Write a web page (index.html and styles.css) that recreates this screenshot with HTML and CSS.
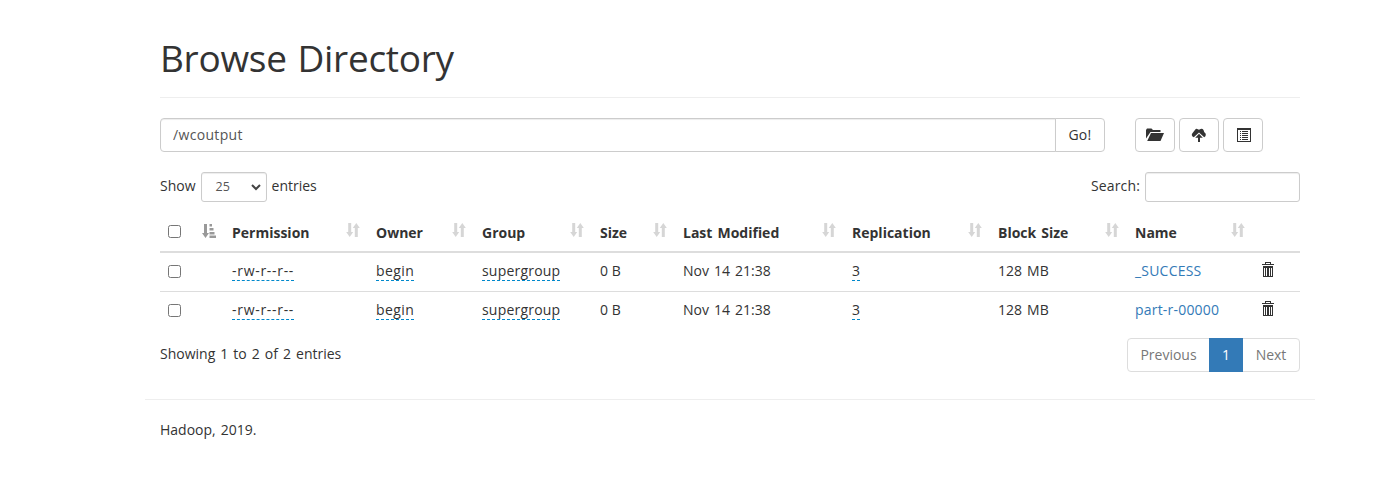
FILE: index.html
```html
<!DOCTYPE html>
<html lang="en">
<head>
<meta charset="utf-8">
<title>Browsing HDFS</title>
<link rel="stylesheet" href="styles.css">
</head>
<body>
<svg class="defs" width="0" height="0" aria-hidden="true">
  <symbol id="sort" viewBox="0 0 14 16"><path d="M2.200 1h3v9h2l-3.500 5L.2 10h2zM8.800 15h3V6h2l-3.500-5-3.500 5h2z"/></symbol>
  <symbol id="sort-asc" viewBox="0 0 16 16"><path d="M3 1h3v9h2l-3.500 5L1 10h2zM8.500 1h2.500v2.500H8.500zM8.500 5h4v2.500h-4zM8.500 9h5v2.500h-5zM8.500 12.500H15V15H8.500z"/></symbol>
  <symbol id="trash" viewBox="0 0 14 16"><path fill-rule="evenodd" d="M4 2V0h6v2h3v1H1V2zM5 2h4V1H5zM2 4h10v11H2zM3 6v8h1V6zM5 6v8h1V6zM8 6v8h1V6zM10 6v8h1V6z"/></symbol>
</svg>
<div class="container">
  <header class="page-header"><h1>Browse Directory</h1></header>
  <div class="toolbar">
    <div class="path-group">
      <input class="path" type="text" value="/wcoutput">
      <button class="btn go">Go!</button>
    </div>
    <div class="actions">
      <button class="btn icon-btn"><svg width="18" height="14" viewBox="0 0 18 14"><path d="M0 10.500V2L1 .5h4.500L7 2h7.500v2H4.500zM5 5h13L14.500 13H1.200z"/></svg></button>
      <button class="btn icon-btn"><svg width="16" height="14" viewBox="0 0 16 14"><path d="M2.800 9.300A2.600 2.600 0 0 1 1.800 4.700L4.300 1.500Q5 .5 6.200 1L8 1.700 9.600.9Q11.500.4 12.500 2L13.300 4.300A2.700 2.700 0 0 1 13.200 9.200L8 4.500zM8 5.800l3.800 4H9V14H7V9.800H4.200z"/></svg></button>
      <button class="btn icon-btn"><svg class="list-icon" width="14" height="14" viewBox="0 0 14 14"><path fill-rule="evenodd" d="M0 0h14v14H0zM1 2v11h12V2zM3 3h1v1H3zM5 3h6v1H5zM3 5h1v1H3zM5 5h6v1H5zM3 7h1v1H3zM5 7h6v1H5zM3 9h1v1H3zM5 9h6v1H5zM3 11h1v1H3zM5 11h6v1H5z"/></svg></button>
    </div>
  </div>
  <div class="controls">
    <label class="length">Show
      <span class="select-box"><span>25</span><svg width="10" height="7" viewBox="0 0 10 7"><path d="M1 1l4 4 4-4"/></svg></span>
      entries</label>
    <label class="search">Search: <input class="search-input" type="text"></label>
  </div>
  <table class="files">
    <colgroup><col class="c-check"><col class="c-perm"><col class="c-owner"><col class="c-group"><col class="c-size"><col class="c-mod"><col class="c-rep"><col class="c-block"><col class="c-name"><col class="c-del"></colgroup>
    <thead>
      <tr>
        <th><div class="head"><input type="checkbox"><svg class="sorted" width="16" height="16"><use href="#sort-asc"/></svg></div></th>
        <th><div class="head"><span>Permission</span><svg width="14" height="16"><use href="#sort"/></svg></div></th>
        <th><div class="head"><span>Owner</span><svg width="14" height="16"><use href="#sort"/></svg></div></th>
        <th><div class="head"><span>Group</span><svg width="14" height="16"><use href="#sort"/></svg></div></th>
        <th><div class="head"><span>Size</span><svg width="14" height="16"><use href="#sort"/></svg></div></th>
        <th><div class="head"><span>Last Modified</span><svg width="14" height="16"><use href="#sort"/></svg></div></th>
        <th><div class="head"><span>Replication</span><svg width="14" height="16"><use href="#sort"/></svg></div></th>
        <th><div class="head"><span>Block Size</span><svg width="14" height="16"><use href="#sort"/></svg></div></th>
        <th><div class="head"><span>Name</span><svg width="14" height="16"><use href="#sort"/></svg></div></th>
        <th></th>
      </tr>
    </thead>
    <tbody>
      <tr>
        <td><input type="checkbox"></td>
        <td><span class="editable perm">-rw-r--r--</span></td>
        <td><span class="editable owner">begin</span></td>
        <td><span class="editable group">supergroup</span></td>
        <td class="size">0 B</td><td>Nov 14 21:38</td>
        <td><span class="editable">3</span></td>
        <td>128 MB</td><td><a>_SUCCESS</a></td>
        <td><svg class="trash" width="14" height="16"><use href="#trash"/></svg></td>
      </tr>
      <tr>
        <td><input type="checkbox"></td>
        <td><span class="editable perm">-rw-r--r--</span></td>
        <td><span class="editable owner">begin</span></td>
        <td><span class="editable group">supergroup</span></td>
        <td class="size">0 B</td><td>Nov 14 21:38</td>
        <td><span class="editable">3</span></td>
        <td>128 MB</td><td><a>part-r-00000</a></td>
        <td><svg class="trash" width="14" height="16"><use href="#trash"/></svg></td>
      </tr>
    </tbody>
  </table>
  <div class="summary">
    <div class="info">Showing 1 to 2 of 2 entries</div>
    <div class="pagination"><span class="prev">Previous</span><span class="active">1</span><span class="next">Next</span></div>
  </div>
  <hr>
  <footer>Hadoop, 2019.</footer>
</div>
</body>
</html>
```
FILE: styles.css
```css
* { box-sizing: border-box; }
body { margin: 0; background: #fff; color: #333; font: 14px/20px "Open Sans", "Noto Sans", sans-serif; word-spacing: 1.4px; }
input, button { font: inherit; color: inherit; }
.defs { display: block; height: 0; }
.container { width: 1140px; margin-left: 160px; padding-top: 36px; }
.page-header { height: 62px; border-bottom: 1px solid #eee; }
h1 { margin: 0; font-size: 37px; font-weight: 400; line-height: 44px; letter-spacing: -.28px; white-space: nowrap; }
.toolbar { display: flex; gap: 30px; margin-top: 20px; }
.path-group { display: flex; width: 945px; height: 34px; }
.path { flex: 1; min-width: 0; padding: 0 12px; border: 1px solid #ccc; border-radius: 4px 0 0 4px; color: #555; letter-spacing: .33px; outline: 0; box-shadow: inset 0 1px 1px rgba(0,0,0,.075); }
.btn { background: #fff; border: 1px solid #ccc; border-radius: 4px; padding: 0; display: flex; align-items: center; justify-content: center; }
.go { width: 50px; margin-left: -1px; border-radius: 0 4px 4px 0; letter-spacing: .3px; }
.actions { display: flex; gap: 4px; }
.icon-btn { width: 40px; height: 34px; }
.list-icon { margin-left: 2px; }
.btn svg, .trash { fill: #333; }
.controls { display: flex; justify-content: space-between; height: 30px; margin-top: 20px; }
.length, .search { display: flex; gap: 5px; line-height: 28px; }
.search { letter-spacing: .15px; }
.select-box { display: flex; align-items: center; justify-content: space-between; width: 66px; height: 30px; padding: 0 5px 0 14px; border: 1px solid #ccc; border-radius: 3px; color: #555; font-size: 12.500px; box-shadow: inset 0 1px 1px rgba(0,0,0,.075); }
.select-box svg { fill: none; stroke: #444; stroke-width: 2; }
.search-input { width: 155px; height: 30px; border: 1px solid #ccc; border-radius: 3px; box-shadow: inset 0 1px 1px rgba(0,0,0,.075); }
.files { width: 1140px; margin-top: 10px; table-layout: fixed; border-collapse: separate; border-spacing: 0; }
.c-check { width: 64px; } .c-perm { width: 144px; } .c-owner { width: 106px; } .c-group { width: 118px; }
.c-size { width: 83px; } .c-mod { width: 169px; } .c-rep { width: 146px; } .c-block { width: 137px; }
.c-name { width: 126px; } .c-del { width: 47px; }
th, td { padding: 0 8px; text-align: left; white-space: nowrap; }
th { height: 41px; border-bottom: 2px solid #ddd; font-weight: 700; }
td { height: 38px; padding-bottom: 2px; line-height: 20px; }
tbody tr + tr td { border-top: 1px solid #ddd; height: 39px; }
.head { display: flex; align-items: center; justify-content: space-between; }
.head span { padding-top: 2px; }
.head svg { fill: #d6d6d6; position: relative; top: -2px; }
.head svg.sorted { fill: #999; left: 1px; top: -1px; }
input[type=checkbox] { display: block; width: 13px; height: 13px; margin: 0; }
.editable { border-bottom: 1px dashed #08c; }
.perm { letter-spacing: .7px; }
.owner { letter-spacing: .4px; }
.group { letter-spacing: .2px; }
.size { word-spacing: 0; }
a { color: #337ab7; letter-spacing: .2px; }
.trash { display: block; margin-top: -2px; }
.summary { display: flex; justify-content: space-between; margin-top: 8px; }
.info { line-height: 32px; }
.pagination { display: flex; height: 34px; line-height: 32px; color: #777; text-align: center; }
.pagination span { border: 1px solid #ddd; }
.prev { width: 83px; border-radius: 4px 0 0 4px; }
.pagination .active { width: 34px; margin: 0 -1px; background: #337ab7; border-color: #337ab7; color: #fff; position: relative; }
.next { width: 58px; border-radius: 0 4px 4px 0; }
hr { height: 1px; margin: 27px -15px 20px; border: 0; background: #eee; }
```
